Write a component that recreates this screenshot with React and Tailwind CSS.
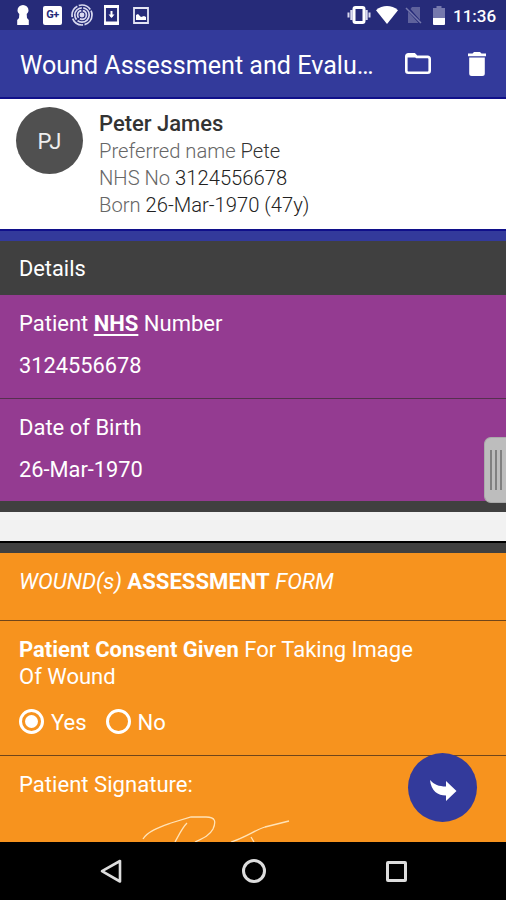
import React from "react";

function StatusBar() {
  return (
    <div className="flex h-[30px] shrink-0 items-center bg-[#262b79] text-white">
      {/* Notifications */}
      <svg className="ml-[16px] h-[20px] w-[14px]" viewBox="0 0 14 20" fill="#fff">
        <path d="M7 0a5.500 5.500 0 0 1 5.500 5.500c0 1.600-.9 2.400-1.800 3.400L11 13l1.800 2v5H1.200v-5L3 13l.3-4.100C2.400 7.900 1.500 7.100 1.500 5.500A5.500 5.500 0 0 1 7 0z" />
      </svg>
      <div className="ml-[13px] flex h-[19px] w-[19px] items-center justify-center rounded-[2px] bg-white text-[11px] font-bold tracking-tighter text-[#262b79]">
        G+
      </div>
      <svg className="ml-[9px] h-[22px] w-[22px]" viewBox="0 0 22 22" fill="none" stroke="#d9daf0" strokeWidth="1.700">
        <circle cx="11" cy="11" r="10" strokeDasharray="13 1.500" />
        <circle cx="11" cy="11" r="7.200" strokeDasharray="16 1.500" />
        <circle cx="11" cy="11" r="4.400" strokeDasharray="9 1.500" />
        <circle cx="11" cy="11" r="1.600" fill="#d9daf0" />
      </svg>
      <svg className="ml-[11px] h-[20px] w-[15px]" viewBox="0 0 15 20" fill="none" stroke="#fff">
        <path d="M1 1h13v18H1z" strokeWidth="1.800" />
        <path d="M0 1.500h15M0 18h15" strokeWidth="3" />
        <path d="M7.500 6v6" strokeWidth="2" />
        <path d="M4.500 9.500h6l-3 3.500z" fill="#fff" stroke="none" />
      </svg>
      <svg className="ml-[14px] h-[17px] w-[16px]" viewBox="0 0 16 17" fill="none">
        <path d="M1 1h14v15H1z" stroke="#e4e5f4" strokeWidth="1.800" />
        <path d="M3 13V8l2-1 3 3 3-1 2 1v3z" fill="#fff" />
      </svg>

      {/* System icons */}
      <svg className="ml-auto h-[18px] w-[24px]" viewBox="0 0 24 18" fill="none" stroke="#fff">
        <rect x="7" y="1.500" width="10" height="15" rx="1.500" strokeWidth="3" />
        <path d="M4.500 4v10M19.500 4v10" strokeWidth="2.400" stroke="#d9daf0" />
        <path d="M1.500 6.500v5M22.500 6.500v5" strokeWidth="2" stroke="#d9daf0" />
      </svg>
      <svg className="ml-[5px] h-[18px] w-[22px]" viewBox="0 0 22 18" fill="#fff">
        <path d="M0 4.200C6.500-1.400 15.500-1.400 22 4.200L11 18z" />
      </svg>
      <svg className="ml-[7px] h-[18px] w-[18px]" viewBox="0 0 18 18">
        <path d="M7 1h8v13L5.500 3zM3 5.500L13.500 17H3z" fill="#5f629c" />
        <path d="M1 2l15 15" stroke="#7679ad" strokeWidth="1.500" />
      </svg>
      <svg className="ml-[10px] h-[19px] w-[12px]" viewBox="0 0 12 19">
        <path d="M0 2h3.500V0h5v2H12v10H0z" fill="#7679ad" />
        <path d="M0 12h12v6a1 1 0 0 1-1 1H1a1 1 0 0 1-1-1z" fill="#fff" />
      </svg>
      <span className="mr-[10px] ml-[8px] w-[43px] pt-[2px] text-[17px] leading-none font-medium whitespace-nowrap">
        11:36
      </span>
    </div>
  );
}

function AppBar() {
  return (
    <div className="flex h-[69px] shrink-0 items-center border-b-2 border-[#10108a] bg-[#333a9b] text-white">
      <h1 className="ml-5 w-[354px] pt-[4px] text-[25.100px] leading-8 whitespace-nowrap">
        Wound Assessment and Evalu…
      </h1>
      <svg className="ml-[31px] h-[21px] w-[26px]" viewBox="0 0 26 21" fill="none" stroke="#fff" strokeWidth="2.600">
        <path d="M1.300 3.300a2 2 0 0 1 2-2h6l2.500 2.600h10.900a2 2 0 0 1 2 2v11.800a2 2 0 0 1-2 2H3.300a2 2 0 0 1-2-2z" />
        <path d="M2 3.200h9.500" />
      </svg>
      <svg className="ml-[37px] h-[24px] w-[18px]" viewBox="0 0 18 24" fill="#fff">
        <path d="M0 1.500h4.500L6 0h6l1.500 1.500H18v2.700H0zM1.200 5.500h15.600v16A2.500 2.500 0 0 1 14.300 24H3.700a2.500 2.500 0 0 1-2.500-2.500z" />
      </svg>
    </div>
  );
}

function PatientCard() {
  return (
    <div className="flex h-[130px] shrink-0 bg-white pt-2 pl-4">
      <div className="flex size-[67px] items-center justify-center rounded-full bg-[#505050] pt-[2px] text-[22px] text-[#eee]">
        PJ
      </div>
      <div className="ml-4 pt-[3px] text-[20.200px] leading-[27px] font-light text-[#666]">
        <p className="mb-px text-[22px] font-medium text-[#333]">Peter James</p>
        <p>
          Preferred name <span className="text-[#333]">Pete</span>
        </p>
        <p>
          NHS No <span className="text-[#222]">3124556678</span>
        </p>
        <p>
          Born <span className="text-[#222]">26-Mar-1970 (47y)</span>
        </p>
      </div>
    </div>
  );
}

function Field({ label, value }) {
  return (
    <div className="px-[19px] pt-[13px]">
      <p className="leading-8">{label}</p>
      <p className="mt-[10px] text-[21.800px] leading-8">{value}</p>
    </div>
  );
}

function Radio({ label, checked }) {
  return (
    <label className="flex items-center gap-[7px]">
      <span className="flex size-[25px] items-center justify-center rounded-full border-[3px] border-white">
        {checked && <span className="size-[13px] rounded-full bg-white"></span>}
      </span>
      <span className="pt-[2px]">{label}</span>
    </label>
  );
}

function NavBar() {
  return (
    <div className="flex h-[58px] shrink-0 items-center bg-black">
      <svg className="ml-[100px] h-[24px] w-[22px]" viewBox="0 0 22 24" fill="none" stroke="#ddd" strokeWidth="2.600" strokeLinejoin="round">
        <path d="M20 2v20.500L2 12.200z" />
      </svg>
      <div className="ml-[120px] size-[24px] rounded-full border-[3px] border-[#ddd]"></div>
      <div className="ml-[120px] size-[21px] rounded-[2px] border-[3px] border-[#ddd]"></div>
    </div>
  );
}

export default function App() {
  return (
    <div className="relative flex h-[900px] w-[506px] flex-col overflow-hidden bg-[#404040] font-[Roboto,sans-serif] text-[22px] text-white">
      <StatusBar />
      <AppBar />
      <PatientCard />

      {/* Details */}
      <div className="h-[12px] shrink-0 border-t-2 border-[#10108a] bg-[#333a9b]"></div>
      <div className="flex h-[54px] shrink-0 items-center px-[19px] pt-[2px] text-[21.800px]">Details</div>
      <div className="h-[103px] shrink-0 bg-[#943b91]">
        <Field
          label={
            <>
              Patient <b className="underline decoration-2 underline-offset-[3px]">NHS</b> Number
            </>
          }
          value="3124556678"
        />
      </div>
      <div className="h-[103px] shrink-0 border-t border-[#56304f] bg-[#943b91]">
        <Field label="Date of Birth" value="26-Mar-1970" />
      </div>
      <div className="h-[11px] shrink-0"></div>
      <div className="h-[31px] shrink-0 border-b-2 border-black bg-[#f2f2f2]"></div>
      <div className="h-[10px] shrink-0"></div>

      {/* Assessment form */}
      <div className="h-[67px] shrink-0 bg-[#f7931e] px-[19px] pt-[12px] text-[22.100px] leading-8">
        <i>WOUND(s)</i> <b>ASSESSMENT</b> <i>FORM</i>
      </div>
      <div className="h-[135px] shrink-0 border-t border-[#70451a] bg-[#f7931e] px-[19px] pt-[15px]">
        <div className="leading-[27px]">
          <p>
            <b>Patient Consent Given</b> For Taking Image
          </p>
          <p>Of Wound</p>
        </div>
        <div className="mt-[14px] flex gap-[19px]">
          <Radio label="Yes" checked />
          <Radio label="No" />
        </div>
      </div>
      <div className="h-[87px] shrink-0 overflow-hidden border-t border-[#70451a] bg-[#f7931e]">
        <p className="mb-px px-[19px] pt-[12px] text-[22.100px] leading-8">Patient Signature:</p>
        <svg className="ml-[140px] h-[41px] w-[160px]" viewBox="0 0 160 41" fill="none" stroke="#ffe3b8" strokeWidth="1.300">
          <path d="M3 38c5-8 17-12 28-16l20-6h15c10 0 10 5 7 12-3 6-9 9-18 13" />
          <path d="M47 22c-5 5-8 12-12 19M91 41c16-5 24-12 34-15l24-6M111 36l3 5" />
        </svg>
      </div>
      <NavBar />

      {/* Drawer handle */}
      <div className="absolute top-[437px] right-0 flex h-[66px] w-[22px] items-center justify-center gap-[3px] rounded-l-[7px] border border-r-0 border-[#aaa] bg-[#bdbdbd]">
        <span className="h-[40px] w-[2px] bg-[#808080]"></span>
        <span className="h-[40px] w-[2px] bg-[#808080]"></span>
        <span className="h-[40px] w-[2px] bg-[#808080]"></span>
      </div>

      {/* Next button */}
      <button className="absolute top-[753px] left-[408px] flex size-[69px] items-center justify-center rounded-full bg-[#333a9b]">
        <svg className="mt-[5px] h-[21px] w-[28px]" viewBox="0 0 28 21" fill="#fff">
          <path d="M1 0c4 4.500 9 6.500 16 6.500V1l10.500 10L17 21v-5.500C9 15.500 2 11 1 0z" />
        </svg>
      </button>
    </div>
  );
}
